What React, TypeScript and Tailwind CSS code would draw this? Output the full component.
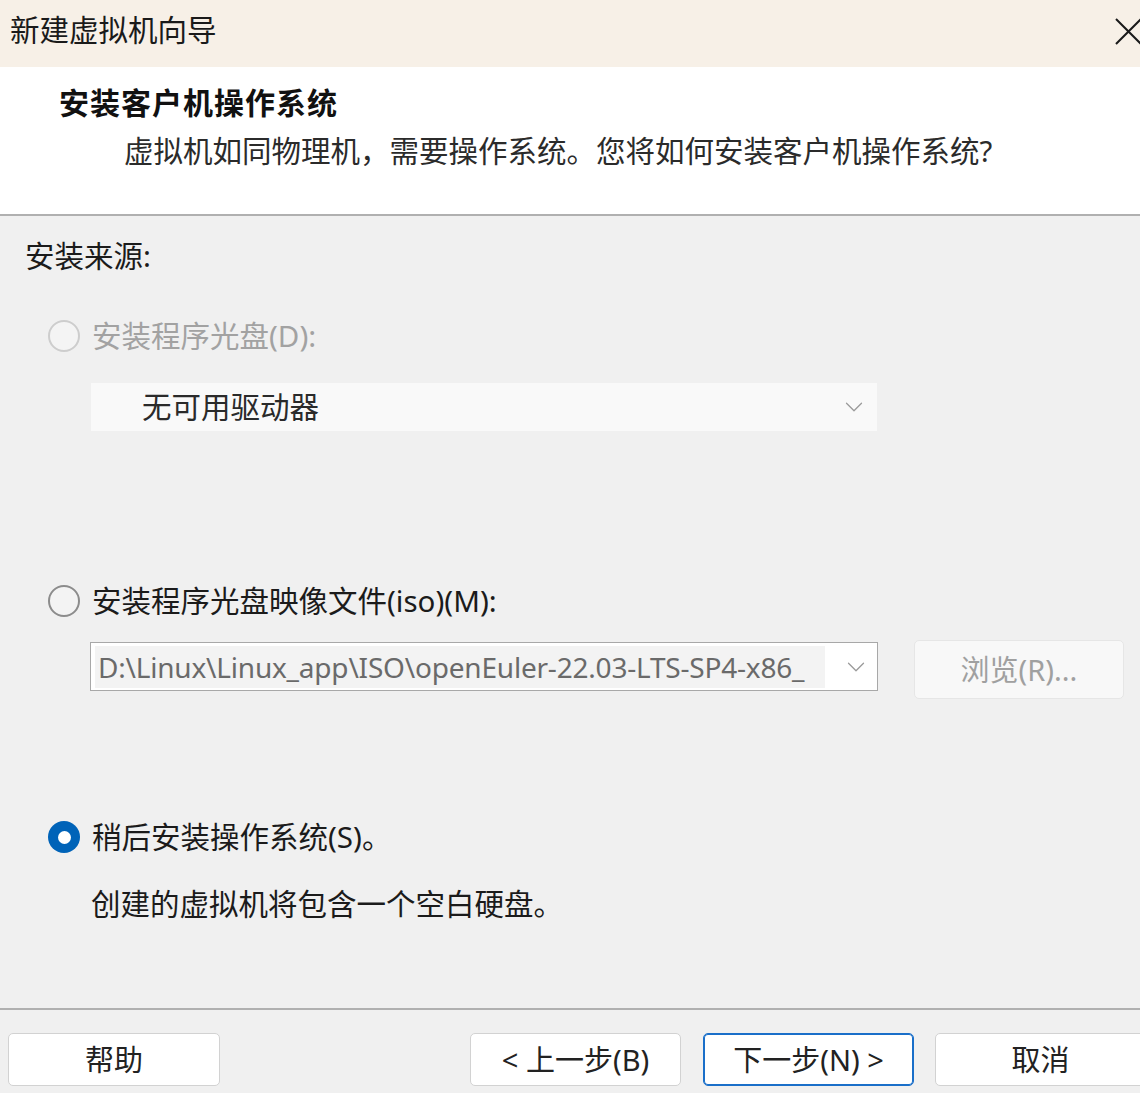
import { ChevronDown } from 'lucide-react';

const font = { fontFamily: '"Noto Sans", "Noto Sans CJK SC", sans-serif' };

function Radio({ state }: { state: 'disabled' | 'off' | 'on' }) {
  if (state === 'on') {
    return (
      <span className="flex h-[32px] w-[32px] items-center justify-center rounded-full bg-[#0063b8]">
        <span className="h-[13px] w-[13px] rounded-full bg-white" />
      </span>
    );
  }
  return (
    <span
      className={`h-[32px] w-[32px] rounded-full border-2 ${
        state === 'disabled' ? 'border-[#cdcdcd] bg-[#f4f4f4]' : 'border-[#8c8c8c] bg-[#f3f3f3]'
      }`}
    />
  );
}

function FooterButton({ label, primary, className = '' }: { label: string; primary?: boolean; className?: string }) {
  return (
    <button
      className={`flex h-[53px] w-[211px] shrink-0 items-center justify-center rounded-[5px] bg-white text-[29px] text-[#222] ${
        primary ? 'border border-[#1a6fc9] shadow-[inset_0_0_0_1px_#1a6fc9]' : 'border border-[#d2d2d2]'
      } ${className}`}
    >
      {label}
    </button>
  );
}

export default function App() {
  return (
    <div style={font} className="flex h-[1093px] w-[1140px] flex-col overflow-hidden bg-[#f0f0f0] text-[#1b1b1b]">
      {/* title bar */}
      <div className="flex h-[67px] shrink-0 items-center justify-between bg-[#f7f0e7] pl-[10px]">
        <span className="mb-[7px] text-[29.5px] leading-none text-[#1a1a1a]">新建虚拟机向导</span>
        <svg width="28" height="28" viewBox="0 0 28 28" className="-mr-[3px] mb-[6px]">
          <path d="M1 2 L26 27 M26 2 L1 27" stroke="#1a1a1a" strokeWidth="2" />
        </svg>
      </div>

      {/* header */}
      <div className="h-[149px] shrink-0 border-b-2 border-[#b0b0b0] bg-white">
        <div className="ml-[59px] mt-[18px] text-[30px] font-bold leading-[36px] tracking-[1px] text-[#111]">
          安装客户机操作系统
        </div>
        <div className="ml-[124px] mt-[12px] text-[29.5px] leading-[36px] text-[#2b2b2b]">
          虚拟机如同物理机，需要操作系统。您将如何安装客户机操作系统?
        </div>
      </div>

      {/* body */}
      <div className="flex flex-1 flex-col border-b-2 border-[#b0b0b0]">
        <div className="ml-[25px] mt-[20px] text-[29.5px] leading-[40px] text-[#1b1b1b]">安装来源:</div>

        <div className="ml-[48px] mt-[40px] flex h-[40px] items-center gap-[12px]">
          <Radio state="disabled" />
          <span className="text-[29.5px] text-[#a2a2a2]">安装程序光盘(D):</span>
        </div>

        <div className="ml-[91px] mt-[27px] flex h-[48px] w-[786px] items-center justify-between bg-[#f9f9f9] pl-[51px] pr-[8px]">
          <span className="text-[29.5px] text-[#2a2a2a]">无可用驱动器</span>
          <ChevronDown className="h-[30px] w-[30px] text-[#9a9a9a]" strokeWidth={1} />
        </div>

        <div className="ml-[48px] mt-[150px] flex h-[40px] items-center gap-[12px]">
          <Radio state="off" />
          <span className="text-[29.5px] text-[#1b1b1b]">安装程序光盘映像文件(iso)(M):</span>
        </div>

        <div className="ml-[90px] mt-[19px] flex items-start">
          <div className="mt-[2px] flex h-[49px] w-[788px] items-center border border-[#a8a8a8] bg-white pl-[4px] pr-[6px]">
            <div className="flex h-[42px] w-[730px] items-center overflow-hidden whitespace-nowrap bg-[#f3f3f3] pl-[3px] text-[28px] tracking-[-0.2px] text-[#6a6a6a]">
              D:\Linux\Linux_app\ISO\openEuler-22.03-LTS-SP4-x86_
            </div>
            <ChevronDown className="ml-auto h-[30px] w-[30px] text-[#9a9a9a]" strokeWidth={1} />
          </div>
          <button className="ml-[36px] flex h-[59px] w-[210px] items-center justify-center rounded-[5px] border border-[#e6e6e6] bg-[#f8f8f8] text-[29px] text-[#a0a0a0]">
            浏览(R)...
          </button>
        </div>

        <div className="ml-[48px] mt-[118px] flex h-[40px] items-center gap-[12px]">
          <Radio state="on" />
          <span className="text-[29.5px] text-[#1b1b1b]">稍后安装操作系统(S)。</span>
        </div>

        <div className="ml-[91px] mt-[27px] text-[29.5px] leading-[40px] text-[#1b1b1b]">
          创建的虚拟机将包含一个空白硬盘。
        </div>
      </div>

      {/* footer */}
      <div className="flex h-[83px] shrink-0 items-start pl-[8px] pt-[23px]">
        <FooterButton label="帮助" className="w-[212px]" />
        <FooterButton label="< 上一步(B)" className="ml-[250px]" />
        <FooterButton label="下一步(N) >" primary className="ml-[22px]" />
        <FooterButton label="取消" className="ml-[21px]" />
      </div>
    </div>
  );
}
